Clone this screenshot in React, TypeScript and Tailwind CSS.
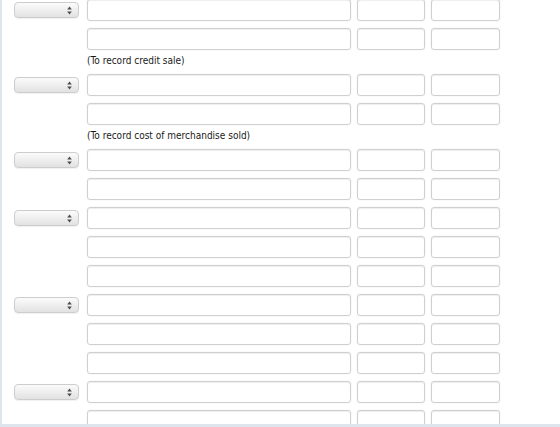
import React from 'react';

type Line =
  | { kind: 'row'; account?: boolean }
  | { kind: 'note'; text: string };

const LINES: Line[] = [
  { kind: 'row', account: true },
  { kind: 'row' },
  { kind: 'note', text: '(To record credit sale)' },
  { kind: 'row', account: true },
  { kind: 'row' },
  { kind: 'note', text: '(To record cost of merchandise sold)' },
  { kind: 'row', account: true },
  { kind: 'row' },
  { kind: 'row', account: true },
  { kind: 'row' },
  { kind: 'row' },
  { kind: 'row', account: true },
  { kind: 'row' },
  { kind: 'row' },
  { kind: 'row', account: true },
  { kind: 'row' },
];

function AccountSelect() {
  return (
    <div className="relative h-[16px] w-[65px] rounded-[4px] border border-[#cdcdcd] bg-gradient-to-b from-[#fbfbfb] to-[#e2e2e2] shadow-[0_1px_1px_rgba(0,0,0,0.06)]">
      <svg
        className="absolute right-[6px] top-[3px]"
        width="5"
        height="9"
        viewBox="0 0 5 9"
      >
        <path d="M2.5 0.5 L4.8 3.5 L0.2 3.5 Z" fill="#4a4a4a" />
        <path d="M2.5 8.5 L4.8 5.5 L0.2 5.5 Z" fill="#4a4a4a" />
      </svg>
    </div>
  );
}

function Field({ className }: { className: string }) {
  return (
    <div
      className={`h-[22px] rounded-[3px] border border-[#d0d0d0] bg-white shadow-[inset_0_1px_1px_rgba(0,0,0,0.07),0_0_0_1px_rgba(0,0,0,0.02)] ${className}`}
    />
  );
}

function EntryRow({ account }: { account?: boolean }) {
  return (
    <div className="mb-[7px] flex h-[22px] items-center">
      <div className="flex w-[73px] items-center">{account && <AccountSelect />}</div>
      <Field className="w-[264px]" />
      <Field className="ml-[6px] w-[68px]" />
      <Field className="ml-[6px] w-[69px]" />
    </div>
  );
}

export default function App() {
  return (
    <div className="h-[427px] w-[560px] overflow-hidden bg-white">
      <div className="h-[427px] overflow-hidden border-b-[3px] border-l-2 border-[#dfe5ec] pl-[12px]">
        <div className="-mt-px">
          {LINES.map((line, i) =>
            line.kind === 'row' ? (
              <EntryRow key={i} account={line.account} />
            ) : (
              <p
                key={i}
                className="-mt-[4px] mb-[5px] pl-[73px] text-[10px] leading-[16px] text-[#1a1a1a]"
                style={{ fontFamily: '"DejaVu Sans Condensed", "DejaVu Sans", sans-serif' }}
              >
                {line.text}
              </p>
            )
          )}
        </div>
      </div>
    </div>
  );
}
